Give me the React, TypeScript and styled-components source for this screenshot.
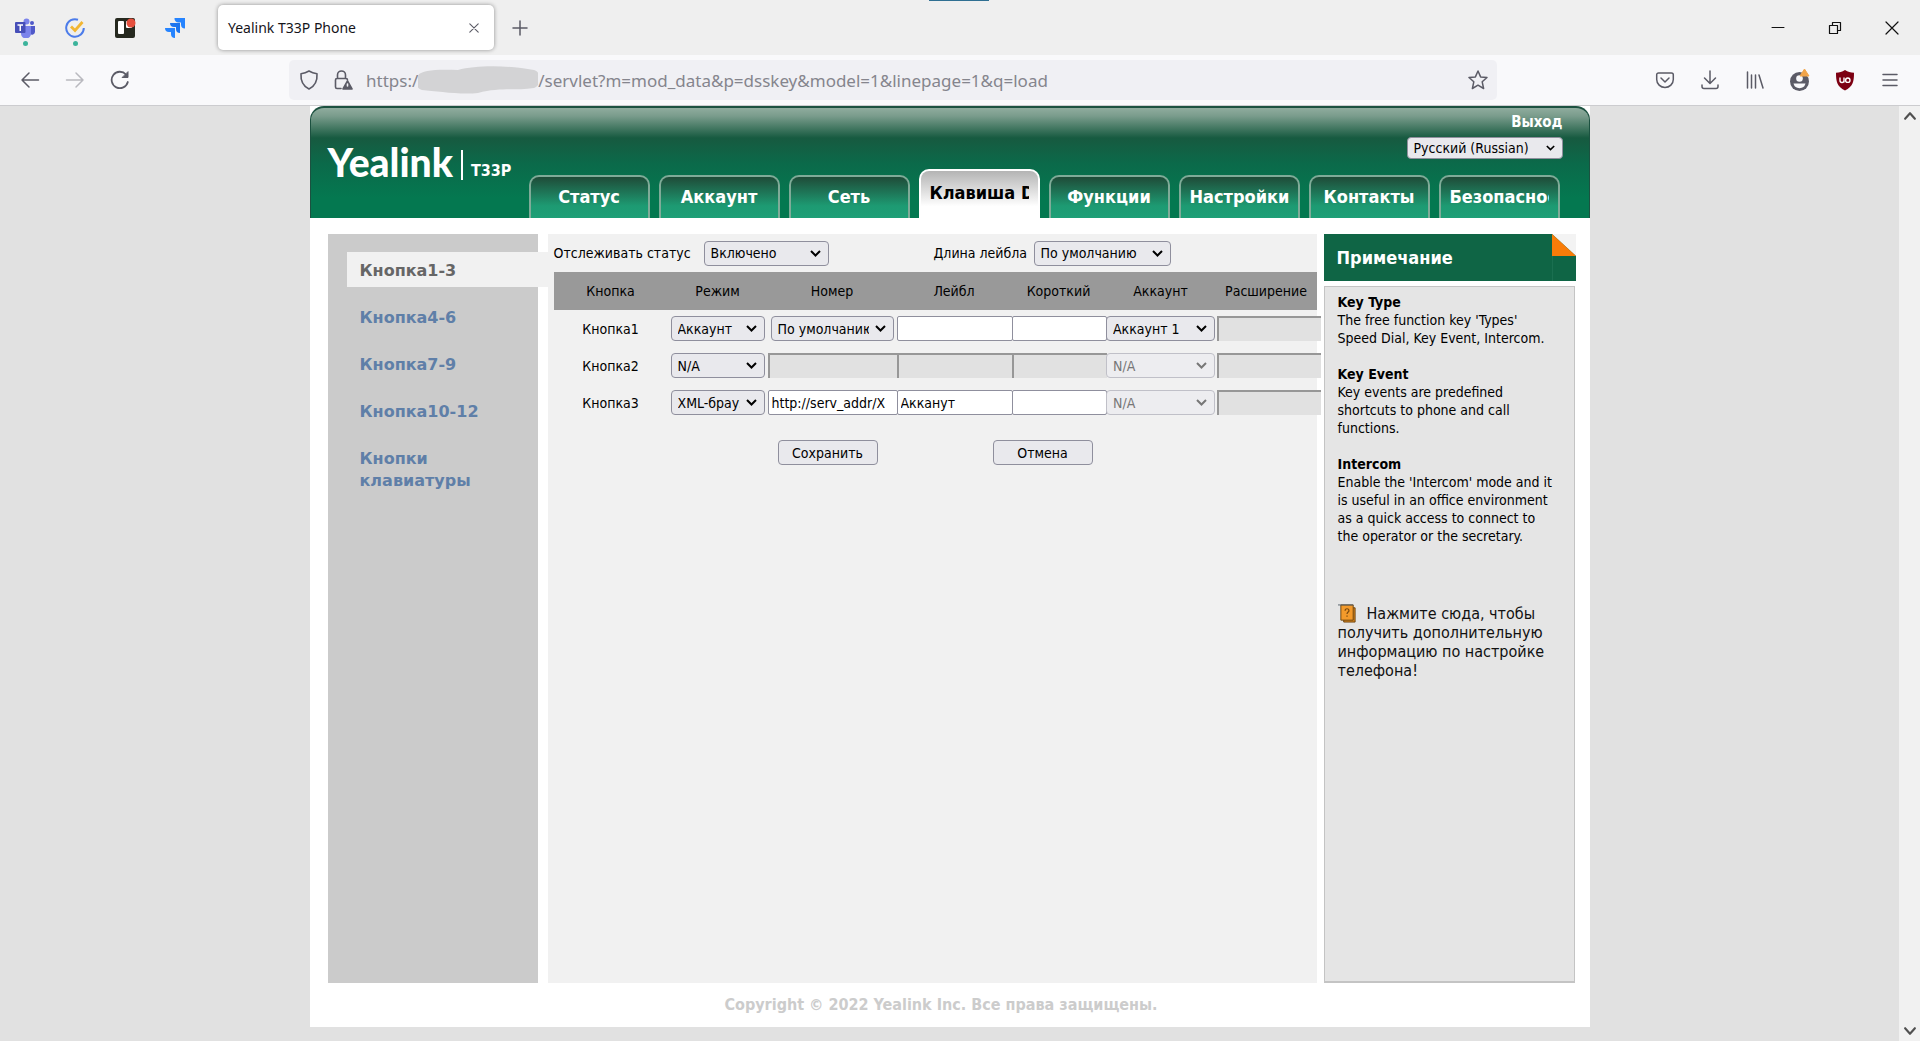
import React, { useState } from "react";
import styled, { createGlobalStyle, css } from "styled-components";

const pageFont = `"DejaVu Sans Condensed", "Noto Sans", "DejaVu Sans", sans-serif`;
const wideFont = `"DejaVu Sans", Verdana, sans-serif`;
const chromeFont = `"Noto Sans", "Open Sans", sans-serif`;

const GlobalStyle = createGlobalStyle`
  * { box-sizing: border-box; }
  body { margin: 0; background: #e1e1e1; font-family: ${pageFont}; color: #000; }
  button, input, select { font-family: inherit; margin: 0; }
  a { text-decoration: none; }
`;

/* ---------- browser window ---------- */

const Window = styled.div`
  display: flex;
  flex-direction: column;
  height: 100vh;
  overflow: hidden;
  font-family: ${chromeFont};
`;

const TitleBar = styled.header`
  position: relative;
  display: flex;
  align-items: center;
  flex: none;
  height: 55px;
  background: #efefef;
`;

const TopHandle = styled.div`
  position: absolute;
  top: 0;
  left: 50%;
  width: 60px;
  height: 1px;
  margin-left: -31px;
  background: #2f6f92;
`;

const Pinned = styled.button`
  display: grid;
  justify-items: center;
  align-content: start;
  gap: 3px;
  width: 50px;
  height: 55px;
  padding: 18px 0 0;
  border: 0;
  background: none;
`;

const Dot = styled.span`
  width: 5px;
  height: 5px;
  border-radius: 50%;
  background: #3bb39b;
`;

const Tab = styled.div`
  display: flex;
  align-items: center;
  justify-content: space-between;
  width: 276px;
  height: 45px;
  margin-left: 18px;
  padding: 0 10px;
  border-radius: 5px;
  background: #fff;
  box-shadow: 0 0 4px rgba(0, 0, 0, 0.4);
  font-size: 14px;
  color: #15141a;
`;

const IconButton = styled.button<{ $w: number }>`
  display: grid;
  place-items: center;
  flex: none;
  width: ${(p) => p.$w}px;
  height: 40px;
  padding: 0;
  border: 0;
  background: none;
  color: #5b5b66;

  &:disabled { color: #b9b9bf; }
`;

const WindowButtons = styled.div`
  display: flex;
  margin-left: auto;

  button { color: #111; }
`;

const Toolbar = styled.div`
  display: flex;
  align-items: center;
  flex: none;
  height: 51px;
  padding: 0 8px 0 7px;
  border-bottom: 1px solid #cccccf;
  background: #f9f9fb;
`;

const AddressBar = styled.div`
  display: flex;
  align-items: center;
  flex: 1;
  height: 40px;
  margin: 0 145px 0 147px;
  padding-left: 3px;
  border-radius: 5px;
  background: #f0f0f4;
  font-size: 17px;
  color: #85858d;
`;

const Scheme = styled.span`
  margin-left: 6px;
`;

const AddressInput = styled.input`
  flex: 1;
  min-width: 0;
  padding: 0;
  border: 0;
  outline: 0;
  background: none;
  font-size: inherit;
  color: inherit;
`;

const Viewport = styled.div`
  display: flex;
  flex: 1;
  min-height: 0;
  background: #e1e1e1;
`;

const ScrollTrack = styled.div`
  display: flex;
  flex-direction: column;
  justify-content: space-between;
  align-items: center;
  width: 21px;
  padding: 3px 0;
  background: #f1f1f1;
  color: #505050;
`;

/* ---------- phone web page ---------- */

const Page = styled.div`
  flex: 1;
  min-width: 0;
  overflow: hidden;
  font-family: ${pageFont};
`;

const Sheet = styled.div`
  width: 1280px;
  max-width: 100%;
  margin: 0 auto;
  background: #fff;
`;

const Banner = styled.header`
  display: flex;
  height: 112px;
  border: solid #1c5140;
  border-width: 2px 1px 0;
  border-radius: 14px 14px 0 0;
  background: linear-gradient(#8fac9e 0, #7a9c8c 8px, #175a40 30px, #0b6a4a 56px, #047850 90px, #047850);
`;

const Brand = styled.div`
  display: flex;
  align-items: flex-end;
  flex: none;
  gap: 8px;
  width: 218px;
  height: 76px;
  padding: 0 0 4px 17px;
  color: #fff;
`;

const Wordmark = styled.span`
  font: 900 39px/36px Lato, sans-serif;
`;

const BrandRule = styled.span`
  width: 2px;
  height: 30px;
  background: #fff;
`;

const Model = styled.span`
  font: bold 16px/18px ${pageFont};
`;

const BannerMain = styled.div`
  display: flex;
  flex: 1;
  min-width: 0;
  flex-direction: column;
  justify-content: space-between;
`;

const Session = styled.div`
  display: flex;
  flex-direction: column;
  align-items: flex-end;
  gap: 6px;
  padding: 5px 26px 0 0;
`;

const Logout = styled.a`
  font-size: 15px;
  font-weight: bold;
  line-height: 18px;
  color: #fff;
`;

const Tabs = styled.nav`
  display: flex;
  align-items: flex-end;
  gap: 9px;
  height: 49px;
`;

const NavTab = styled.a<{ $active?: boolean }>`
  display: flex;
  width: 121px;
  height: 43px;
  padding: 0 9px;
  border: 2px solid #7fab98;
  border-bottom: 0;
  border-radius: 10px 10px 0 0;
  background: linear-gradient(#1f4b38, #1d9a72 70%, #1e9f77);
  font-size: 18px;
  font-weight: bold;
  line-height: 40px;
  white-space: nowrap;
  color: #fff;

  ${(p) =>
    p.$active &&
    css`
      height: 49px;
      border-color: #fff;
      background: linear-gradient(#b4b4b4, #fff 75%);
      line-height: 44px;
      color: #000;
    `}
`;

const NavText = styled.span`
  flex: 1;
  overflow: hidden;
  text-align: center;
`;

const Body = styled.div`
  display: flex;
  min-height: 749px;
  margin: 16px 14px 0 18px;
`;

const Side = styled.nav`
  flex: none;
  width: 210px;
  padding: 18px 0 0 19px;
  background: #cbcbcb;
`;

const SideLink = styled.a<{ $active?: boolean }>`
  display: block;
  width: 160px;
  margin-bottom: 12px;
  padding: 8px 0 5px 13px;
  font: bold 16px/22px ${wideFont};
  color: #5f7fa8;

  ${(p) =>
    p.$active &&
    css`
      width: 201px;
      background: #f1f1f1;
      color: #666;
    `}
`;

const Main = styled.main`
  flex: 1;
  min-width: 0;
  margin: 0 7px 0 10px;
  padding-left: 6px;
  background: #f1f1f1;
  font-size: 14px;
`;

const Options = styled.div`
  display: grid;
  grid-template-columns: 380px 1fr;
  align-items: center;
  height: 38px;
`;

const Option = styled.div<{ $label: number }>`
  display: grid;
  grid-template-columns: ${(p) => p.$label}px auto;
  justify-content: start;
  align-items: center;
  gap: 5px;
  white-space: nowrap;
`;

const SelectBox = styled.span<{ $w: number }>`
  display: inline-grid;
  align-items: center;
  justify-items: end;
  width: ${(p) => p.$w}px;
  vertical-align: middle;

  > * { grid-area: 1 / 1; }
  > svg { margin-right: 8px; pointer-events: none; }
`;

const Select = styled.select<{ $small?: boolean }>`
  appearance: none;
  width: 100%;
  height: ${(p) => (p.$small ? 22 : 25)}px;
  padding: 0 24px 0 6px;
  border: 1px solid #8f8f9d;
  border-radius: 4px;
  background: #e9e9ed;
  font-size: 14px;
  color: #000;
  opacity: 1;

  &:disabled {
    border-color: #c0c0c8;
    background: #ededf0;
    color: #777;
  }
  &:disabled + svg { color: #777; }
`;

const KeyTable = styled.table`
  width: 100%;
  table-layout: fixed;
  border-collapse: collapse;

  thead { background: #999; }
  th { height: 38px; padding: 0; font-weight: normal; }
  td { height: 37px; padding: 0; text-align: center; white-space: nowrap; }
`;

const Col = styled.col<{ $w: number }>`
  width: ${(p) => p.$w}px;
`;

const KeyName = styled.label`
  display: block;
`;

const Field = styled.input`
  display: block;
  width: calc(100% + 1px);
  height: 25px;
  padding: 0 3px;
  border: 1px solid #8f8f9d;
  border-radius: 2px;
  background: #fff;
  font-size: 14px;

  &:disabled {
    border: solid #979797;
    border-width: 2px 0 0 2px;
    border-radius: 0;
    background: #e1e1e1;
  }
`;

const Extension = styled(Field)`
  width: 104px;
  margin-left: 1px;
`;

const Actions = styled.div`
  display: flex;
  gap: 115px;
  padding: 19px 0 0 224px;
`;

const Button = styled.button`
  width: 100px;
  height: 25px;
  padding: 0;
  border: 1px solid #8f8f9d;
  border-radius: 4px;
  background: #e9e9ed;
  font-size: 14px;
  color: #000;
`;

const Aside = styled.aside`
  display: flex;
  flex: none;
  flex-direction: column;
  gap: 5px;
  width: 252px;
`;

const NoteHead = styled.h2`
  display: flex;
  justify-content: space-between;
  height: 47px;
  margin: 0;
  padding-left: 13px;
  background: #0f6545;
  font: bold 18px/47px ${pageFont};
  color: #fff;
`;

const NoteBody = styled.div`
  flex: 1;
  margin-right: 1px;
  padding: 6px 19px 0 13px;
  border: 1px solid #c4c4c4;
  border-bottom-width: 2px;
  background: #e5e5e5;
`;

const Topic = styled.section`
  margin-bottom: 18px;
  font-size: 14px;
  line-height: 18px;

  h3 { margin: 0; font-size: inherit; }
  p { margin: 0; }
`;

const HelpLink = styled.a`
  display: block;
  margin-top: 59px;
  font-size: 16px;
  line-height: 19px;
  color: #111;

  svg { margin-right: 10px; vertical-align: text-bottom; }
`;

const Footer = styled.footer`
  padding: 10px 17px 10px 0;
  font-size: 16px;
  font-weight: bold;
  line-height: 24px;
  text-align: center;
  color: #ccc;
`;

/* ---------- drawings ---------- */

const Line = ({ size = 20, w = 1.5, children }: { size?: number; w?: number; children: React.ReactNode }) => (
  <svg width={size} height={size} viewBox="0 0 20 20" fill="none" stroke="currentColor" strokeWidth={w} strokeLinecap="round" strokeLinejoin="round">
    {children}
  </svg>
);

const Chevron = ({ small }: { small?: boolean }) => (
  <svg width={small ? 9 : 11} height={small ? 6 : 7} viewBox="0 0 11 7" fill="none" stroke="currentColor" strokeWidth="2">
    <path d="M1 1l4.500 4.500L10 1" />
  </svg>
);

const TeamsIcon = () => (
  <svg width="20" height="20" viewBox="0 0 20 20">
    <circle cx="17" cy="5" r="2" fill="#5059c9" />
    <circle cx="11.500" cy="3.500" r="3" fill="#7b83eb" />
    <path d="M14 8h6v6a3 3 0 01-5 2z" fill="#5059c9" />
    <path d="M6 8h10v7a5 5 0 01-10 1z" fill="#7b83eb" />
    <rect x="0" y="4" width="10.500" height="11" rx="1" fill="#464eb8" />
    <path d="M2.500 7h5.500M5.250 7v6" stroke="#fff" strokeWidth="1.500" />
  </svg>
);

const TickIcon = () => (
  <svg width="20" height="20" viewBox="0 0 20 20" fill="none">
    <path d="M13 1.700A8.800 8.800 0 1018.800 10" stroke="#4c7cea" strokeWidth="2" />
    <path d="M6 8.500l4 4L17.500 4" stroke="#f2b632" strokeWidth="2.800" />
  </svg>
);

const BoardIcon = () => (
  <svg width="21" height="20" viewBox="0 0 21 20">
    <rect width="20" height="20" rx="2" fill="#26291f" />
    <rect x="3" y="3" width="6" height="13" rx="1" fill="#fff" />
    <rect x="11" y="3" width="6" height="7" rx="1" fill="#fff" />
    <circle cx="16" cy="5" r="4.500" fill="#e5503e" />
  </svg>
);

const JiraIcon = () => (
  <svg width="21" height="20" viewBox="0 0 21 20">
    <path d="M9.500 0H20v10.500a4 4 0 01-4-4V4.500h-2.500a4 4 0 01-4-4.500z" fill="#2684ff" />
    <path d="M5 5h10v10a4 4 0 01-4-4V9H9a4 4 0 01-4-4z" fill="#1c74ee" />
    <path d="M0 10h10v10a4 4 0 01-4-4v-2H4a4 4 0 01-4-4z" fill="#2684ff" />
  </svg>
);

const Smudge = () => (
  <svg width="120" height="28" viewBox="2 0 120 28">
    <path d="M0 14C1 5 12 3 42 4C60-1 92-1 118 4C127 7 125 20 118 22C100 25 85 21 62 27C44 29 20 25 6 24C1 22 0 19 0 14z" fill="#d3d3d5" />
  </svg>
);

const AccountIcon = () => (
  <svg width="22" height="24" viewBox="0 0 22 24">
    <circle cx="10.500" cy="13.500" r="9.500" fill="#5b5b66" />
    <circle cx="10.500" cy="10.500" r="3.300" fill="#f9f9fb" />
    <path d="M4.500 15.500h12a6.200 6.200 0 01-12 0z" fill="#f9f9fb" />
    <path d="M15.500 1l4.500 7h-9z" fill="#f2a54a" stroke="#f2a54a" strokeLinejoin="round" />
  </svg>
);

const UblockIcon = () => (
  <svg width="20" height="21" viewBox="0 0 20 21">
    <path d="M10 0c3 2 5.500 2.500 9 2.700C19 12 18 16 10 20.500C2 16 1 12 1 2.700C4.500 2.500 7 2 10 0z" fill="#7d0012" />
    <path d="M5 7.500v3a2 2 0 004 0v-3M9 10.300v2.200" stroke="#fff" strokeWidth="1.400" fill="none" />
    <circle cx="12.800" cy="10.200" r="2.200" stroke="#fff" strokeWidth="1.400" fill="none" />
  </svg>
);

const FoldedCorner = () => (
  <svg width="24" height="47" viewBox="0 0 24 47">
    <path d="M0 0h24v22z" fill="#f3f3f3" />
    <path d="M0 0l24 22H0z" fill="#f97c08" />
    <path d="M0.500 22v25" stroke="#1a6f50" />
  </svg>
);

const BookIcon = () => (
  <svg width="19" height="19" viewBox="0 0 20 20">
    <path d="M6 4h12v15H6z" fill="#d9861c" stroke="#6b4310" />
    <path d="M3 1h13v16H3z" fill="#f39a2b" stroke="#6b4310" />
    <path d="M0 1h16" stroke="#55606a" />
    <path d="M7.500 7a2 2 0 114 0c0 1.500-2 1.500-2 3.500M9.500 12v1.500" stroke="#7a4a10" strokeWidth="1.300" fill="none" />
  </svg>
);

/* ---------- parts ---------- */

type DropProps = { id?: string; label?: string; width: number; value: string; small?: boolean; disabled?: boolean };

const Drop = ({ id, label, width, value, small, disabled }: DropProps) => (
  <SelectBox $w={width}>
    <Select id={id} aria-label={label} $small={small} disabled={disabled} defaultValue={value}>
      <option>{value}</option>
    </Select>
    <Chevron small={small} />
  </SelectBox>
);

const tabs = ["Статус", "Аккаунт", "Сеть", "Клавиша DSS", "Функции", "Настройки", "Контакты", "Безопасность"];
const sideLinks = ["Кнопка1-3", "Кнопка4-6", "Кнопка7-9", "Кнопка10-12", "Кнопки клавиатуры"];
const columns: [string, number][] = [
  ["Кнопка", 114],
  ["Режим", 100],
  ["Номер", 129],
  ["Лейбл", 115],
  ["Короткий", 94],
  ["Аккаунт", 110],
  ["Расширение", 101],
];

type KeyRow = { name: string; mode: string; line?: string; number?: string; label?: string; account?: string; off?: boolean };

const rows: KeyRow[] = [
  { name: "Кнопка1", mode: "Аккаунт", line: "По умолчанию", account: "Аккаунт 1" },
  { name: "Кнопка2", mode: "N/A", off: true },
  { name: "Кнопка3", mode: "XML-браузер", number: "http://serv_addr/X", label: "Акканут" },
];

const topics = [
  ["Key Type", "The free function key 'Types' Speed Dial, Key Event, Intercom."],
  ["Key Event", "Key events are predefined shortcuts to phone and call functions."],
  ["Intercom", "Enable the 'Intercom' mode and it is useful in an office environment as a quick access to connect to the operator or the secretary."],
];

const BrowserChrome = () => (
  <>
    <TitleBar>
      <TopHandle />
      <Pinned aria-label="Teams"><TeamsIcon /><Dot /></Pinned>
      <Pinned aria-label="Tasks"><TickIcon /><Dot /></Pinned>
      <Pinned aria-label="Board"><BoardIcon /></Pinned>
      <Pinned aria-label="Jira"><JiraIcon /></Pinned>
      <Tab>
        Yealink T33P Phone
        <IconButton $w={20} aria-label="Close tab"><Line size={14} w={1.600}><path d="M4 4l12 12M16 4L4 16" /></Line></IconButton>
      </Tab>
      <IconButton $w={52} aria-label="New tab"><Line><path d="M10 3v14M3 10h14" /></Line></IconButton>
      <WindowButtons>
        <IconButton $w={57} aria-label="Minimize"><Line w={1}><path d="M4 9.500h12" /></Line></IconButton>
        <IconButton $w={57} aria-label="Restore"><Line w={1.200}><path d="M4.500 7.500h8v8h-8zM7.500 7.500v-3h8v8h-3" /></Line></IconButton>
        <IconButton $w={57} aria-label="Close"><Line w={1.200}><path d="M4 4l12 12M16 4L4 16" /></Line></IconButton>
      </WindowButtons>
    </TitleBar>
    <Toolbar>
      <IconButton $w={45} aria-label="Back"><Line><path d="M18.500 10H2M9 3l-7 7 7 7" /></Line></IconButton>
      <IconButton $w={45} aria-label="Forward" disabled><Line><path d="M1.500 10H18M11 3l7 7-7 7" /></Line></IconButton>
      <IconButton $w={45} aria-label="Reload">
        <Line w={1.800}><path d="M17.800 12A8.200 8.200 0 1116 4.500" /><path d="M18 2v5.500h-5.500z" fill="currentColor" strokeWidth="1" /></Line>
      </IconButton>
      <AddressBar>
        <IconButton $w={34} aria-label="Protection">
          <Line w={1.600}><path d="M10 1c2.500 1.500 5 2.300 8 2.700C18.500 11 16 16 10 19C4 16 1.500 11 2 3.700C5 3.300 7.500 2.500 10 1z" /></Line>
        </IconButton>
        <IconButton $w={34} aria-label="Connection">
          <Line w={1.600}>
            <path d="M8 18.500H4a1.500 1.500 0 01-1.500-1.500V10A1.500 1.500 0 014 8.500h9A1.500 1.500 0 0114.500 10M4.500 8.500V5a4 4 0 018 0v3.500" />
            <path d="M14.500 11l4.500 8h-9z" fill="currentColor" /><path d="M14.500 14v2" stroke="#f0f0f4" />
          </Line>
        </IconButton>
        <Scheme>https:/</Scheme>
        <Smudge />
        <AddressInput aria-label="Address" defaultValue="/servlet?m=mod_data&p=dsskey&model=1&linepage=1&q=load" />
        <IconButton $w={38} aria-label="Bookmark">
          <Line w={1.500}><path d="M10 1l2.600 5.900 6.400.6-4.800 4.300 1.400 6.700L10 15.200l-5.600 3.300 1.400-6.700L1 7.500l6.400-.6z" /></Line>
        </IconButton>
      </AddressBar>
      <IconButton $w={45} aria-label="Pocket"><Line><path d="M3.500 3h13A1.800 1.800 0 0118.300 4.800V9.500a8.300 8 0 01-16.600 0V4.800A1.800 1.800 0 013.500 3zM6 8l4 4 4-4" /></Line></IconButton>
      <IconButton $w={45} aria-label="Downloads"><Line><path d="M10 1v12M4.500 8l5.500 5.500L15.500 8M2 15v1.500A2 2 0 004 18.500h12a2 2 0 002-2V15" /></Line></IconButton>
      <IconButton $w={45} aria-label="Library"><Line><path d="M2.500 2v16M6.500 5v13M10.500 5v13M14 5l4 13" /></Line></IconButton>
      <IconButton $w={45} aria-label="Account"><AccountIcon /></IconButton>
      <IconButton $w={45} aria-label="uBlock"><UblockIcon /></IconButton>
      <IconButton $w={45} aria-label="Menu"><Line><path d="M3 4.500h14M3 10h14M3 15.500h14" /></Line></IconButton>
    </Toolbar>
  </>
);

const Row = ({ row }: { row: KeyRow }) => {
  const [number, setNumber] = useState(row.number ?? "");
  const id = `mode-${row.name}`;
  return (
    <tr>
      <td><KeyName htmlFor={id}>{row.name}</KeyName></td>
      <td><Drop id={id} width={94} value={row.mode} /></td>
      <td>
        {row.line ? (
          <Drop label="Номер" width={123} value={row.line} />
        ) : (
          <Field aria-label="Номер" value={number} onChange={(e) => setNumber(e.target.value)} disabled={row.off} />
        )}
      </td>
      <td><Field aria-label="Лейбл" defaultValue={row.label} disabled={row.off} /></td>
      <td><Field aria-label="Короткий" disabled={row.off} /></td>
      <td><Drop label="Аккаунт" width={109} value={row.account ?? "N/A"} disabled={!row.account} /></td>
      <td><Extension aria-label="Расширение" disabled /></td>
    </tr>
  );
};

export default function App() {
  return (
    <Window>
      <GlobalStyle />
      <BrowserChrome />
      <Viewport>
        <Page>
          <Sheet>
            <Banner>
              <Brand>
                <Wordmark>Yealink</Wordmark>
                <BrandRule />
                <Model>T33P</Model>
              </Brand>
              <BannerMain>
                <Session>
                  <Logout href="#logout">Выход</Logout>
                  <Drop label="Язык" width={156} value="Русский (Russian)" small />
                </Session>
                <Tabs>
                  {tabs.map((t, i) => (
                    <NavTab key={t} href={`#tab${i}`} $active={i === 3}><NavText>{t}</NavText></NavTab>
                  ))}
                </Tabs>
              </BannerMain>
            </Banner>
            <Body>
              <Side>
                {sideLinks.map((t, i) => (
                  <SideLink key={t} href={`#page${i}`} $active={i === 0}>{t}</SideLink>
                ))}
              </Side>
              <Main>
                <Options>
                  <Option $label={145}>
                    <label htmlFor="track">Отслеживать статус</label>
                    <Drop id="track" width={125} value="Включено" />
                  </Option>
                  <Option $label={95}>
                    <label htmlFor="length">Длина лейбла</label>
                    <Drop id="length" width={137} value="По умолчанию" />
                  </Option>
                </Options>
                <KeyTable>
                  <colgroup>{columns.map(([c, w]) => <Col key={c} $w={w} />)}</colgroup>
                  <thead><tr>{columns.map(([c]) => <th key={c}>{c}</th>)}</tr></thead>
                  <tbody>{rows.map((r) => <Row key={r.name} row={r} />)}</tbody>
                </KeyTable>
                <Actions>
                  <Button>Сохранить</Button>
                  <Button>Отмена</Button>
                </Actions>
              </Main>
              <Aside>
                <NoteHead>Примечание<FoldedCorner /></NoteHead>
                <NoteBody>
                  {topics.map(([h, p]) => (
                    <Topic key={h}><h3>{h}</h3><p>{p}</p></Topic>
                  ))}
                  <HelpLink href="#help"><BookIcon />Нажмите сюда, чтобы получить дополнительную информацию по настройке телефона!</HelpLink>
                </NoteBody>
              </Aside>
            </Body>
            <Footer>Copyright © 2022 Yealink Inc. Все права защищены.</Footer>
          </Sheet>
        </Page>
        <ScrollTrack aria-hidden="true">
          <Line size={14} w={3}><path d="M3 14l7-8 7 8" /></Line>
          <Line size={14} w={3}><path d="M3 6l7 8 7-8" /></Line>
        </ScrollTrack>
      </Viewport>
    </Window>
  );
}
